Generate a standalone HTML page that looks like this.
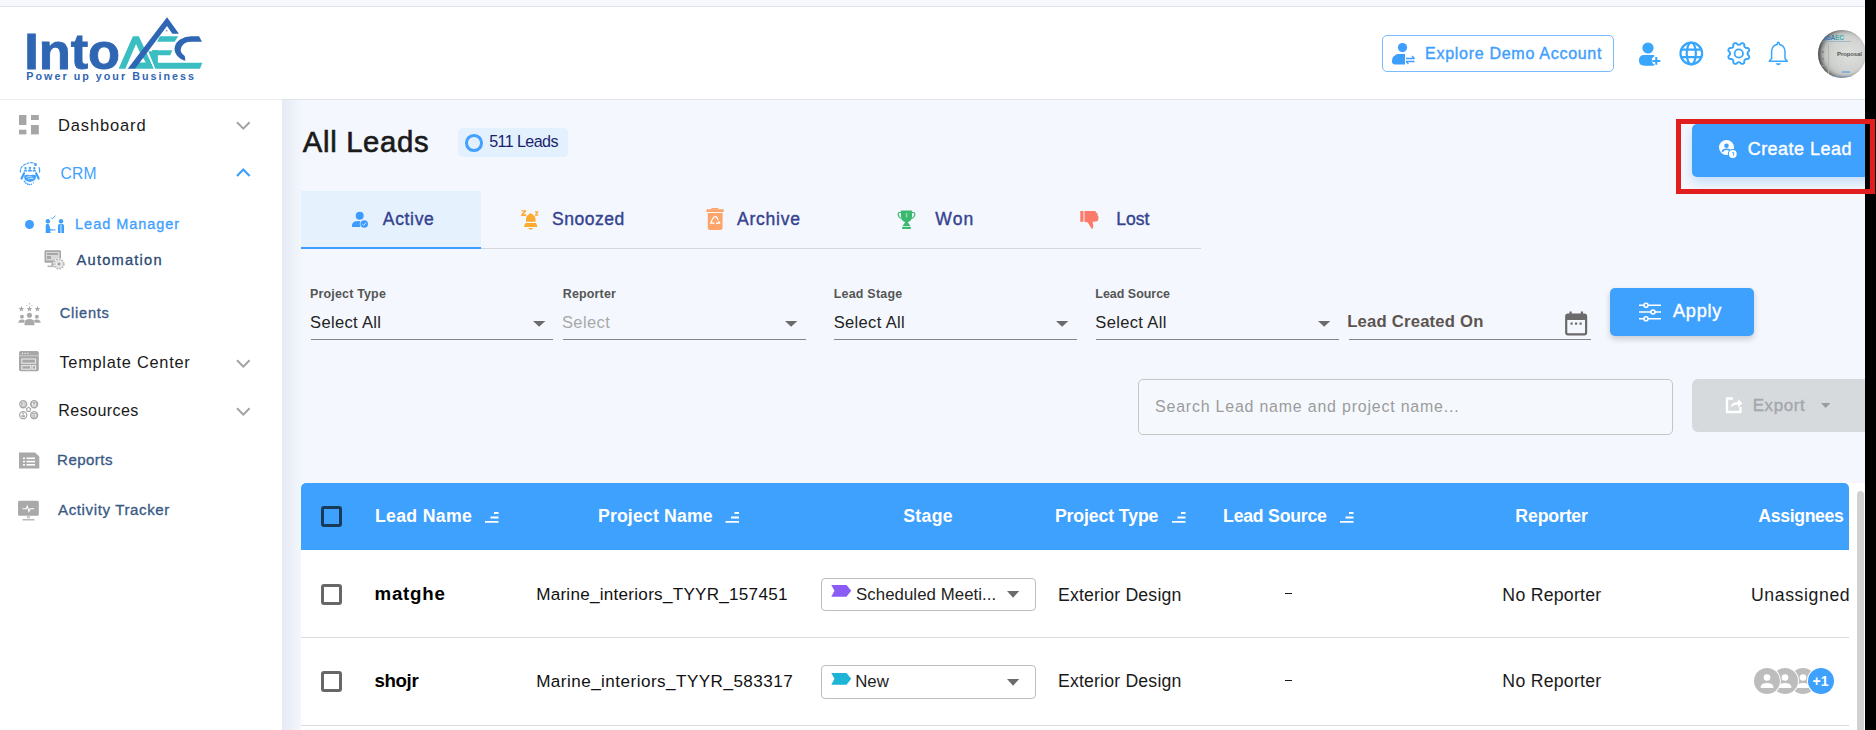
<!DOCTYPE html>
<html><head><meta charset="utf-8">
<style>
html,body{margin:0;padding:0;width:1876px;height:730px;overflow:hidden;background:#fff;}
body{position:relative;font-family:"Liberation Sans",sans-serif;}
.a{position:absolute;}
.tx{position:absolute;font-family:"Liberation Sans",sans-serif;line-height:1;white-space:nowrap;}
svg{position:absolute;overflow:visible;}
.chev{position:absolute;}
</style></head><body>
<!-- top strip -->
<div class="a" style="left:0;top:0;width:1876px;height:6px;background:#f7f8fd"></div>
<div class="a" style="left:0;top:6px;width:1876px;height:1px;background:#e1e3eb"></div>
<!-- header bottom border -->
<div class="a" style="left:0;top:99px;width:282px;height:1px;background:#efefef"></div>
<!-- main bg -->
<div class="a" style="left:282px;top:99px;width:1583px;height:631px;background:#f4f7fd"></div>
<div class="a" style="left:282px;top:99px;width:1583px;height:1px;background:#dfe4ea"></div>
<div class="a" style="left:282px;top:100px;width:20px;height:630px;background:linear-gradient(to right,#e5eaf4,#f4f7fd)"></div>

<!-- LOGO -->
<svg style="left:20px;top:10px" width="190" height="80" viewBox="0 0 1734 730">
  <text x="38" y="535" font-family="Liberation Sans" font-weight="700" font-size="450" fill="#2f66b3" stroke="#2f66b3" stroke-width="8" textLength="875" lengthAdjust="spacingAndGlyphs">Into</text>
  <g transform="translate(867,36.5) scale(0.7249)">
    <polygon points="45,690 225,280 300,280 490,690" fill="#3bbec1"/>
    <polygon points="130,690 265,378 340,545 300,610 250,690" fill="#fff"/>
    <polygon points="300,612 388,612 345,540" fill="#fff"/>
    <polygon points="565,280 795,280 752,350 530,350" fill="#3bbec1"/>
    <polygon points="470,455 722,455 695,518 466,518 " fill="#3bbec1"/>
    <polygon points="418,470 482,470 540,615 1100,615 1070,690 505,690" fill="#3bbec1"/>
    <polygon points="466,455 540,455 540,640 490,640" fill="#3bbec1"/>
    <line x1="405" y1="470" x2="500" y2="695" stroke="#fff" stroke-width="14"/>
    <polygon points="160,690 655,40 805,248 722,248 655,150 252,690" fill="#2f66b3"/>
    <rect x="640" y="200" width="20" height="20" fill="#7a9fd0"/>
    <path d="M1095,348 L1058,280 L960,280 A210,160 0 0 0 887,590 L878,528 A130,100 0 0 1 960,350 Z" fill="#2f66b3"/>
  </g>
  <text x="58" y="640" font-family="Liberation Sans" font-weight="700" font-size="98" fill="#2f66b3" textLength="1530" lengthAdjust="spacing">Power up your Business</text>
</svg>

<!-- Explore demo button -->
<div class="a" style="left:1382px;top:35px;width:230px;height:35px;border:1px solid #78bcff;border-radius:5px;background:#fff"></div>
<svg style="left:1392px;top:43px" width="24" height="22" viewBox="0 0 24 22">
  <circle cx="10.5" cy="4.6" r="4.6" fill="#3d9efe"/>
  <path d="M3,12.5 Q3.5,11 6,11 L13,11 L13,21.5 L3,21.5 Q0,21.5 0,18.5 Q0,13.5 3,12.5 Z" fill="#3d9efe"/>
  <path d="M14,15.5 L22.5,15.5 M20,13 L22.5,15.5 M14,18.5 L22.5,18.5 M16.5,21 L14,18.5" stroke="#3d9efe" stroke-width="1.3" fill="none"/>
</svg>

<!-- header icons -->
<svg style="left:1639px;top:42px" width="22" height="24" viewBox="0 0 22 24">
  <circle cx="9" cy="6" r="5.6" fill="#38a6fc"/>
  <path d="M5,13 L14,13 Q15.5,13 15.8,14.2 Q12.8,15 12.8,18.5 Q12.8,21.5 15.8,22.8 Q15.5,23.7 14,23.7 L5.5,23.7 Q0,23.7 0,18.5 Q0,13 5,13 Z" fill="#38a6fc"/>
  <path d="M17.3,15 L17.3,22.8 M13.3,19 L21.4,19" stroke="#38a6fc" stroke-width="2.1"/>
</svg>
<svg style="left:1679px;top:41px" width="25" height="25" viewBox="0 0 25 25">
  <circle cx="12.3" cy="12.5" r="10.8" stroke="#38a6fc" stroke-width="2.2" fill="none"/>
  <ellipse cx="12.3" cy="12.5" rx="4.6" ry="10.8" stroke="#38a6fc" stroke-width="2.2" fill="none"/>
  <path d="M2.5,8.7 L22.1,8.7 M2.5,16.2 L22.1,16.2" stroke="#38a6fc" stroke-width="2.2"/>
</svg>
<svg style="left:1726px;top:41px" width="26" height="26" viewBox="0 0 26 26">
  <path d="M21.50,12.50 L21.53,12.84 L21.62,13.19 L21.77,13.56 L21.99,13.96 L22.51,14.43 L23.00,14.95 L23.17,15.42 L23.22,15.89 L23.18,16.33 L23.06,16.75 L22.85,17.13 L22.56,17.47 L22.20,17.76 L21.75,17.98 L21.03,18.00 L20.33,17.97 L19.89,18.09 L19.52,18.24 L19.21,18.43 L18.95,18.65 L18.73,18.91 L18.54,19.22 L18.39,19.59 L18.27,20.03 L18.30,20.73 L18.28,21.45 L18.06,21.90 L17.77,22.26 L17.43,22.55 L17.05,22.76 L16.63,22.88 L16.19,22.92 L15.72,22.87 L15.25,22.70 L14.73,22.21 L14.26,21.69 L13.86,21.47 L13.49,21.32 L13.14,21.23 L12.80,21.20 L12.46,21.23 L12.11,21.32 L11.74,21.47 L11.34,21.69 L10.87,22.21 L10.35,22.70 L9.88,22.87 L9.41,22.92 L8.97,22.88 L8.55,22.76 L8.17,22.55 L7.83,22.26 L7.54,21.90 L7.32,21.45 L7.30,20.73 L7.33,20.03 L7.21,19.59 L7.06,19.22 L6.87,18.91 L6.65,18.65 L6.39,18.43 L6.08,18.24 L5.71,18.09 L5.27,17.97 L4.57,18.00 L3.85,17.98 L3.40,17.76 L3.04,17.47 L2.75,17.13 L2.54,16.75 L2.42,16.33 L2.38,15.89 L2.43,15.42 L2.60,14.95 L3.09,14.43 L3.61,13.96 L3.83,13.56 L3.98,13.19 L4.07,12.84 L4.10,12.50 L4.07,12.16 L3.98,11.81 L3.83,11.44 L3.61,11.04 L3.09,10.57 L2.60,10.05 L2.43,9.58 L2.38,9.11 L2.42,8.67 L2.54,8.25 L2.75,7.87 L3.04,7.53 L3.40,7.24 L3.85,7.02 L4.57,7.00 L5.27,7.03 L5.71,6.91 L6.08,6.76 L6.39,6.57 L6.65,6.35 L6.87,6.09 L7.06,5.78 L7.21,5.41 L7.33,4.97 L7.30,4.27 L7.32,3.55 L7.54,3.10 L7.83,2.74 L8.17,2.45 L8.55,2.24 L8.97,2.12 L9.41,2.08 L9.88,2.13 L10.35,2.30 L10.87,2.79 L11.34,3.31 L11.74,3.53 L12.11,3.68 L12.46,3.77 L12.80,3.80 L13.14,3.77 L13.49,3.68 L13.86,3.53 L14.26,3.31 L14.73,2.79 L15.25,2.30 L15.72,2.13 L16.19,2.08 L16.63,2.12 L17.05,2.24 L17.43,2.45 L17.77,2.74 L18.06,3.10 L18.28,3.55 L18.30,4.27 L18.27,4.97 L18.39,5.41 L18.54,5.78 L18.73,6.09 L18.95,6.35 L19.21,6.57 L19.52,6.76 L19.89,6.91 L20.33,7.03 L21.03,7.00 L21.75,7.02 L22.20,7.24 L22.56,7.53 L22.85,7.87 L23.06,8.25 L23.18,8.67 L23.22,9.11 L23.17,9.58 L23.00,10.05 L22.51,10.57 L21.99,11.04 L21.77,11.44 L21.62,11.81 L21.53,12.16 L21.50,12.50 Z" stroke="#38a6fc" stroke-width="1.9" fill="none"/>
  <circle cx="12.8" cy="12.5" r="4.2" stroke="#38a6fc" stroke-width="1.8" fill="none"/>
</svg>
<svg style="left:1768px;top:41px" width="22" height="26" viewBox="0 0 22 26">
  <path d="M10.3,1.3 Q9.2,1.3 9.2,3.6 Q4,4.5 3.6,10.5 L3.6,17.5 L1.3,20.3 L19.3,20.3 L17,17.5 L17,10.5 Q16.6,4.5 11.4,3.6 Q11.4,1.3 10.3,1.3 Z" stroke="#3aa6fc" stroke-width="1.5" fill="none" stroke-linejoin="round"/>
  <path d="M7.6,22.3 L13,22.3 Q11.8,24.3 10.3,24.3 Q8.8,24.3 7.6,22.3 Z" fill="#3aa6fc"/>
</svg>
<!-- avatar -->
<div class="a" style="left:1818px;top:30px;width:48px;height:48px;border-radius:50%;background:radial-gradient(ellipse 75% 70% at 66% 50%,#dde0dc 0%,#d0d3cf 50%,#bcbfbb 80%,#7d807c 94%,#333 100%);box-shadow:inset 3px 0 4px rgba(0,0,0,.55);overflow:hidden">
  <div class="a" style="left:3px;top:4px;font:700 6.5px/7px 'Liberation Sans';color:#3e78b5;letter-spacing:-0.2px">ntoA<span style="color:#3aa9a9">EC</span></div>
  <div class="a" style="left:1px;top:11px;width:32px;height:1px;background:#7fa8c8;opacity:.6"></div>
  <div class="a" style="left:10px;top:14px;width:1px;height:34px;background:#b0b3af"></div>
  <div class="a" style="left:19px;top:21px;font:700 6px/7px 'Liberation Sans';color:#555;letter-spacing:-0.1px">Proposal</div>
  <div class="a" style="left:3px;top:21px;width:3px;height:2px;background:#8a8a8a"></div>
  <div class="a" style="left:3px;top:28px;width:3px;height:2px;background:#8a8a8a"></div>
  <div class="a" style="left:3px;top:35px;width:3px;height:2px;background:#8a8a8a"></div>
  <div class="a" style="left:24px;top:41px;width:8px;height:2px;background:#7aa8d8;opacity:.8"></div>
  <div class="a" style="left:10px;top:46px;width:26px;height:1px;background:#6d9bd0;opacity:.6"></div>
</div>

<!-- SIDEBAR ICONS -->
<svg style="left:19px;top:115px" width="20" height="20" viewBox="0 0 20 20">
  <rect x="0" y="0" width="7.4" height="10" fill="#a6a6a6"/>
  <rect x="12" y="0" width="7.8" height="5" fill="#a6a6a6"/>
  <rect x="0" y="14.7" width="7.4" height="4.7" fill="#a6a6a6"/>
  <rect x="12" y="10" width="7.8" height="9.4" fill="#a6a6a6"/>
</svg>
<svg class="chev" style="left:236px;top:121px" width="15" height="10" viewBox="0 0 15 10"><path d="M1,1.2 L7.3,7.6 L13.6,1.2" stroke="#a3a3a3" stroke-width="2" fill="none"/></svg>

<svg style="left:15px;top:158px" width="30" height="32" viewBox="0 0 684 730">
  <g fill="#3f9ffd" stroke="none">
  <path d="M120,330 Q110,160 345,105 Q420,100 470,140" stroke="#3f9ffd" stroke-width="26" fill="none" stroke-dasharray="70,18"/>
  <circle cx="468" cy="152" r="32"/>
  <path d="M545,205 Q570,260 558,335" stroke="#3f9ffd" stroke-width="26" fill="none"/>
  <circle cx="240" cy="230" r="27"/><circle cx="340" cy="225" r="27"/><circle cx="440" cy="230" r="27"/>
  <path d="M198,310 Q205,265 240,265 Q275,265 282,310 Z"/>
  <path d="M292,310 Q298,258 340,258 Q382,258 388,310 Z"/>
  <path d="M398,310 Q405,265 440,265 Q475,265 482,310 Z"/>
  <path d="M150,468 L205,350" stroke="#3f9ffd" stroke-width="50" stroke-linecap="round" fill="none"/>
  <path d="M538,468 L483,350" stroke="#3f9ffd" stroke-width="50" stroke-linecap="round" fill="none"/>
  <path d="M210,400 Q280,370 345,395 Q410,370 480,400 L470,480 Q420,545 340,548 Q260,545 215,480 Z"/>
  <circle cx="218" cy="535" r="20"/><circle cx="250" cy="572" r="20"/><circle cx="292" cy="598" r="20"/><circle cx="333" cy="607" r="18"/><circle cx="375" cy="598" r="16"/><circle cx="420" cy="565" r="14"/>
  </g>
  <path d="M255,440 Q320,405 400,440 M290,480 Q340,460 420,470" stroke="#fff" stroke-width="16" fill="none"/>
</svg>
<svg class="chev" style="left:236px;top:168px" width="15" height="10" viewBox="0 0 15 10"><path d="M1,8 L7.3,1.6 L13.6,8" stroke="#3f9ffd" stroke-width="2.2" fill="none"/></svg>

<div class="a" style="left:25px;top:220.3px;width:9px;height:9px;border-radius:50%;background:#3f9ffd"></div>
<svg style="left:45px;top:215px" width="20" height="19" viewBox="0 0 20 19">
  <circle cx="2.9" cy="6.2" r="2.2" fill="#3f9ffd"/>
  <circle cx="16" cy="6.2" r="2.2" fill="#3f9ffd"/>
  <path d="M6,2.4 L7.4,3.8 L10.5,0.6" stroke="#3f9ffd" stroke-width="0.9" fill="none"/>
  <path d="M0.7,18 L0.7,10.5 Q0.7,8.8 2.6,8.8 Q4,8.8 4.4,10.5 L5.5,14.2 L10.5,14.6 L10.5,15.5 L5,15.5 L5.8,18 Z" fill="#3f9ffd"/>
  <path d="M13,18 L13,11 Q13,8.8 16,8.8 Q19,8.8 19,11 L19,18 Z" fill="#3f9ffd"/>
  <path d="M15.9,9.5 L15.9,18" stroke="#fff" stroke-width="0.8"/>
</svg>
<svg style="left:44px;top:250px" width="22" height="21" viewBox="0 0 22 21">
  <rect x="0.5" y="0.3" width="16.5" height="12.5" rx="1.2" fill="#a7a7a7"/>
  <rect x="2" y="2" width="13.5" height="8.5" fill="#d8d8d8"/>
  <rect x="3" y="3" width="11" height="2" fill="#a7a7a7"/>
  <rect x="3" y="6" width="4" height="3" fill="#a7a7a7"/>
  <rect x="7.5" y="13" width="2.5" height="3" fill="#a7a7a7"/>
  <rect x="3.5" y="15.5" width="10" height="1.6" fill="#b8b8b8"/>
  <circle cx="15" cy="14" r="5.8" fill="#fff"/>
  <circle cx="15" cy="14" r="4.9" fill="#efefef" stroke="#b5b5b5" stroke-width="1.5" stroke-dasharray="1.7,1.1"/>
  <circle cx="15" cy="14" r="3.6" fill="#f2f2f2" stroke="#c4c4c4" stroke-width="0.6"/>
  <circle cx="15" cy="14" r="1.7" fill="#a7a7a7"/>
</svg>
<svg style="left:14px;top:298px" width="30" height="32" viewBox="0 0 684 730">
  <g fill="#a9a9a9">
  <polygon points="168.0,178.0 185.6,225.7 236.5,227.8 196.5,259.3 210.3,308.2 168.0,280.0 125.7,308.2 139.5,259.3 99.5,227.8 150.4,225.7"/><polygon points="352.0,178.0 369.6,225.7 420.5,227.8 380.5,259.3 394.3,308.2 352.0,280.0 309.7,308.2 323.5,259.3 283.5,227.8 334.4,225.7"/><polygon points="535.0,178.0 552.6,225.7 603.5,227.8 563.5,259.3 577.3,308.2 535.0,280.0 492.7,308.2 506.5,259.3 466.5,227.8 517.4,225.7"/>
  <path d="M352,112 L352,150 M285,160 L305,185 M420,160 L400,185" stroke="#a9a9a9" stroke-width="18"/>
  <circle cx="352" cy="395" r="58"/>
  <circle cx="180" cy="425" r="45"/>
  <circle cx="522" cy="425" r="45"/>
  <path d="M240,620 L240,560 Q245,480 352,478 Q460,480 465,560 L465,620 Z"/>
  <path d="M95,565 Q100,490 180,488 Q230,488 250,510 Q228,530 225,565 Z"/>
  <path d="M610,565 Q605,490 522,488 Q472,488 452,510 Q474,530 477,565 Z"/>
  </g>
</svg>
<svg style="left:19px;top:351px" width="20" height="21" viewBox="0 0 20 21">
  <rect x="0" y="0" width="19.8" height="20.2" rx="1.8" fill="#a7a7a7"/>
  <rect x="0" y="4.4" width="19.8" height="0.8" fill="#d5d5d5"/>
  <circle cx="3.5" cy="2.4" r="0.55" fill="#fff"/><circle cx="6.2" cy="2.4" r="0.55" fill="#fff"/><circle cx="9" cy="2.4" r="0.55" fill="#fff"/>
  <rect x="2.8" y="8" width="13.8" height="4.2" fill="none" stroke="#f0f0f0" stroke-width="1"/>
  <rect x="2.8" y="14.7" width="9" height="3.5" fill="none" stroke="#f0f0f0" stroke-width="1"/>
  <rect x="13.2" y="14.7" width="3.4" height="3.5" fill="none" stroke="#f0f0f0" stroke-width="1"/>
</svg>
<svg class="chev" style="left:236px;top:359px" width="15" height="10" viewBox="0 0 15 10"><path d="M1,1.2 L7.3,7.6 L13.6,1.2" stroke="#a3a3a3" stroke-width="2" fill="none"/></svg>
<svg style="left:14px;top:396px" width="30" height="28" viewBox="0 0 782 730">
  <g fill="none" stroke="#a9a9a9" stroke-width="34">
  <circle cx="240" cy="215" r="92"/><circle cx="525" cy="215" r="92"/><circle cx="240" cy="500" r="92"/><circle cx="525" cy="500" r="92"/>
  <path d="M380,295 L435,335 L415,400 L345,400 L325,335 Z" stroke-width="30"/>
  </g>
  <g fill="#a9a9a9">
  <rect x="190" y="160" width="100" height="110" fill="none" stroke="#a9a9a9" stroke-width="22"/>
  <rect x="210" y="185" width="20" height="60"/><rect x="250" y="185" width="20" height="60"/>
  <rect x="460" y="160" width="130" height="100" fill="none" stroke="#a9a9a9" stroke-width="24"/>
  <rect x="495" y="170" width="60" height="50"/>
  <circle cx="240" cy="455" r="25"/><rect x="195" y="500" width="90" height="55"/>
  <rect x="470" y="455" width="110" height="100" fill="none" stroke="#a9a9a9" stroke-width="24"/>
  <rect x="505" y="480" width="40" height="60"/>
  </g>
</svg>
<svg class="chev" style="left:236px;top:407px" width="15" height="10" viewBox="0 0 15 10"><path d="M1,1.2 L7.3,7.6 L13.6,1.2" stroke="#a3a3a3" stroke-width="2" fill="none"/></svg>
<svg style="left:19px;top:452px" width="21" height="17" viewBox="0 0 21 17">
  <path d="M0,0.5 L16,0.5 L20.3,4.5 L20.3,16.5 L0,16.5 Z" fill="#a9a9a9"/>
  <g fill="#fff"><rect x="4" y="5.5" width="2" height="1.6"/><rect x="7.5" y="5.5" width="8.5" height="1.6"/><rect x="4" y="8.8" width="2" height="1.6"/><rect x="7.5" y="8.8" width="8.5" height="1.6"/><rect x="4" y="12" width="2" height="1.6"/><rect x="7.5" y="12" width="8.5" height="1.6"/></g>
</svg>
<svg style="left:18px;top:500px" width="22" height="22" viewBox="0 0 22 22">
  <rect x="0" y="0.8" width="20.8" height="15" rx="1.5" fill="#a9a9a9"/>
  <path d="M4.5,8.8 L8.2,8.8 L9.3,6.3 L11,11.5 L12.2,8.8 L16.2,8.8" stroke="#fff" stroke-width="1.1" fill="none"/>
  <rect x="8.8" y="15.8" width="3.2" height="2.5" fill="#c9c9c9"/>
  <rect x="4.5" y="19.2" width="12" height="1.2" fill="#a9a9a9"/>
</svg>

<!-- 511 badge -->
<div class="a" style="left:458px;top:128px;width:110px;height:29px;border-radius:5px;background:#e3f0fd"></div>
<div class="a" style="left:465px;top:134px;width:11.6px;height:11.6px;border:3px solid #43a1ff;border-radius:50%"></div>

<!-- Create lead -->
<div class="a" style="left:1692px;top:124px;width:190px;height:53px;border-radius:5px;background:#3fa1fe;box-shadow:0 5px 12px rgba(60,150,240,.28)"></div>
<svg style="left:1719px;top:140px" width="20" height="20" viewBox="0 0 20 20">
  <circle cx="7.5" cy="7.5" r="7.5" fill="#fff"/>
  <circle cx="7.5" cy="5.8" r="2.3" fill="#3fa1fe"/>
  <path d="M3.3,12 Q4,9.3 7.5,9.3 Q11,9.3 11.7,12" stroke="#3fa1fe" stroke-width="1.6" fill="none"/>
  <circle cx="13.8" cy="14" r="5" fill="#3fa1fe"/>
  <circle cx="13.8" cy="14" r="3.9" fill="#fff"/>
  <path d="M13.3,12.5 L14.6,12.5 L14.6,15.5" stroke="#3fa1fe" stroke-width="0.9" fill="none"/>
</svg>

<!-- tabs -->
<div class="a" style="left:301px;top:191px;width:180px;height:56px;background:#e5f2fe"></div>
<div class="a" style="left:301px;top:247px;width:180px;height:2px;background:#3d9efe"></div>
<div class="a" style="left:481px;top:247.5px;width:720px;height:1px;background:#d3d8df"></div>
<svg style="left:351px;top:211px" width="19" height="18" viewBox="0 0 19 18">
  <circle cx="8.7" cy="4.8" r="4" fill="#3d9bfd"/>
  <path d="M1,15.8 Q0.5,11 5,10.3 L9.3,10 L9.3,16 L2,16 Q1,16 1,15.8 Z" fill="#3d9bfd"/>
  <circle cx="13.2" cy="13" r="4.5" fill="#e5f2fe"/>
  <circle cx="13.2" cy="13" r="3.8" fill="#3d9bfd"/>
  <path d="M11.3,13.2 L12.6,14.4 L15.1,11.7" stroke="#e5f2fe" stroke-width="0.9" fill="none"/>
</svg>
<svg style="left:515px;top:205px" width="30" height="30" viewBox="0 0 730 730">
  <g fill="#fdab2f">
  <path d="M160,125 L272,125 L272,160 L205,228 L272,228 L272,265 L150,265 L150,232 L218,160 L160,160 Z"/>
  <path d="M490,155 L568,155 L568,182 L525,232 L568,232 L568,262 L485,262 L485,236 L528,186 L490,186 Z"/>
  <path d="M268,410 L268,330 Q270,265 330,230 L380,195 L430,230 Q495,270 500,330 L500,410 Z"/>
  <path d="M258,440 L510,440 L540,505 L540,535 L222,535 L222,505 Z"/>
  <path d="M318,560 L442,560 Q410,602 380,602 Q350,602 318,560 Z"/>
  </g>
</svg>
<svg style="left:706px;top:208px" width="18" height="22" viewBox="0 0 18 22">
  <rect x="0.4" y="1.2" width="17.4" height="2.7" rx="0.6" fill="#fda46a"/>
  <path d="M4.8,1.3 L5.8,0 L12,0 L13,1.3 Z" fill="#fda46a"/>
  <path d="M1.8,4.9 L16.6,4.9 L16.6,19.4 Q16.6,21.9 14.1,21.9 L4.3,21.9 Q1.8,21.9 1.8,19.4 Z" fill="#fda46a"/>
  <g stroke="#fff" stroke-width="1.2" fill="none" stroke-linecap="round">
  <path d="M8.2,8.6 L6.2,11.8"/><path d="M10.2,8.6 L12,11.6"/><path d="M5.6,13.6 L4.8,15.2 L8,15.2"/><path d="M10.6,15.2 L13.6,15.2 L12.8,13.6"/>
  </g>
  <path d="M9.2,7.8 L10.6,9 L8.4,9.4 Z M6.5,12.6 L5,14 L4.8,12 Z M11.2,16.5 L9.8,15.2 L11.2,14 Z" fill="#fff"/>
</svg>
<svg style="left:897px;top:210px" width="19" height="20" viewBox="0 0 19 20">
  <path d="M4,0.5 L15,0.5 L15,6.5 Q15,11.5 9.5,12.3 Q4,11.5 4,6.5 Z" fill="#3bb86f"/>
  <path d="M4,2.5 Q1,2.2 1.2,4.5 Q1.5,7.5 4.5,8.5 M15,2.5 Q18,2.2 17.8,4.5 Q17.5,7.5 14.5,8.5" stroke="#3bb86f" stroke-width="1.2" fill="none"/>
  <path d="M8.3,12 L10.7,12 L13.4,16 L5.6,16 Z" fill="#3bb86f"/>
  <rect x="5.2" y="16.8" width="8.6" height="2.3" rx="0.5" fill="#3bb86f"/>
  <rect x="8.8" y="3" width="1.5" height="4.5" fill="#8fd8ac"/>
</svg>
<svg style="left:1080px;top:210px" width="20" height="20" viewBox="0 0 20 20">
  <rect x="0.3" y="1" width="3.2" height="10.8" fill="#fb7a6a"/>
  <path d="M4.5,1 L14.5,1 Q16.3,1 16.3,2.8 Q18.3,3.3 17.6,5.5 Q19.3,6.3 18.3,8.5 Q19,10.5 16.5,11.5 L12.5,11.8 L13.3,15.5 Q13.6,18.5 11.8,19 L7.8,12.5 L4.5,11.8 Z" fill="#fb7a6a"/>
</svg>

<!-- filters -->
<div class="a" style="left:311px;top:339.2px;width:242px;height:1.2px;background:#858585"></div>
<div class="a" style="left:563px;top:339.2px;width:243px;height:1.2px;background:#858585"></div>
<div class="a" style="left:834.4px;top:339.2px;width:242.4px;height:1.2px;background:#858585"></div>
<div class="a" style="left:1096.3px;top:339.2px;width:242.4px;height:1.2px;background:#858585"></div>
<div class="a" style="left:1348.5px;top:339.2px;width:242.5px;height:1.2px;background:#858585"></div>
<svg style="left:533px;top:321px" width="13" height="6" viewBox="0 0 13 6"><path d="M0,0 L12.3,0 L6.15,5.8 Z" fill="#6b6b6b"/></svg>
<svg style="left:785px;top:321px" width="13" height="6" viewBox="0 0 13 6"><path d="M0,0 L12.3,0 L6.15,5.8 Z" fill="#6b6b6b"/></svg>
<svg style="left:1056.3px;top:321px" width="13" height="6" viewBox="0 0 13 6"><path d="M0,0 L12.3,0 L6.15,5.8 Z" fill="#6b6b6b"/></svg>
<svg style="left:1318.3px;top:321px" width="13" height="6" viewBox="0 0 13 6"><path d="M0,0 L12.3,0 L6.15,5.8 Z" fill="#6b6b6b"/></svg>
<svg style="left:1565px;top:311px" width="23" height="25" viewBox="0 0 23 25">
  <rect x="1.2" y="3.5" width="19.9" height="19.8" rx="1.8" stroke="#6b6b6b" stroke-width="2.2" fill="none"/>
  <rect x="1.2" y="3.5" width="19.9" height="5.5" fill="#6b6b6b"/>
  <rect x="4.5" y="0.5" width="2.2" height="4" fill="#6b6b6b"/><rect x="15.8" y="0.5" width="2.2" height="4" fill="#6b6b6b"/>
  <rect x="5.5" y="11.5" width="2.2" height="2.2" fill="#6b6b6b"/><rect x="10" y="11.5" width="2.2" height="2.2" fill="#6b6b6b"/><rect x="14.5" y="11.5" width="2.2" height="2.2" fill="#6b6b6b"/>
</svg>
<!-- apply -->
<div class="a" style="left:1610px;top:288px;width:144px;height:48px;border-radius:5px;background:#3fa1fe;box-shadow:0 3px 6px rgba(0,0,0,.18)"></div>
<svg style="left:1638px;top:302px" width="24" height="20" viewBox="0 0 24 20">
  <g stroke="#fff" stroke-width="1.6" fill="none">
  <path d="M1,3.3 L6,3.3 M10,3.3 L23,3.3 M1,10 L13,10 M17,10 L23,10 M1,16.7 L6,16.7 M10,16.7 L23,16.7"/>
  <circle cx="8" cy="3.3" r="2"/><circle cx="15" cy="10" r="2"/><circle cx="8" cy="16.7" r="2"/>
  </g>
</svg>

<!-- search -->
<div class="a" style="left:1138px;top:379px;width:533px;height:54px;border:1px solid #c6c6c6;border-radius:5px;background:#f5f8fd"></div>
<!-- export -->
<div class="a" style="left:1692px;top:379px;width:190px;height:53px;border-radius:6px;background:#d6dadd"></div>
<svg style="left:1725px;top:396px" width="18" height="18" viewBox="0 0 18 18">
  <path d="M8,2.5 L2,2.5 L2,16 L15.5,16 L15.5,11" stroke="#fff" stroke-width="2.4" fill="none" stroke-linejoin="round"/>
  <path d="M5.5,12 Q6,6 13,6 L13,3 L17.3,7.3 L13,11.5 L13,8.5 Q8,8.3 5.5,12 Z" fill="#fff"/>
</svg>
<svg style="left:1821px;top:402.8px" width="10" height="6" viewBox="0 0 10 6"><path d="M0,0 L9.4,0 L4.7,5 Z" fill="#9a9a9a"/></svg>

<!-- table -->
<div class="a" style="left:301px;top:483px;width:1564px;height:247px;background:#fff"></div>
<div class="a" style="left:301px;top:483px;width:1548px;height:67px;background:#3fa1fe;border-radius:5px 5px 0 0"></div>
<div class="a" style="left:1857px;top:491px;width:7px;height:250px;border-radius:3.5px;background:#d1d1d1"></div>
<div class="a" style="left:321px;top:505.6px;width:15px;height:15px;border:3px solid #173a5b;border-radius:3px"></div>
<svg style="left:484.5px;top:512px" width="14" height="11" viewBox="0 0 14 11"><path d="M9,1 L13.5,1 M5.5,5.5 L13.5,5.5 M0,9.8 L13.5,9.8" stroke="#fff" stroke-width="1.8"/></svg>
<svg style="left:725px;top:512px" width="15" height="11" viewBox="0 0 14 11"><path d="M9,1 L13.5,1 M5.5,5.5 L13.5,5.5 M0,9.8 L13.5,9.8" stroke="#fff" stroke-width="1.8"/></svg>
<svg style="left:1171.5px;top:512px" width="14" height="11" viewBox="0 0 14 11"><path d="M9,1 L13.5,1 M5.5,5.5 L13.5,5.5 M0,9.8 L13.5,9.8" stroke="#fff" stroke-width="1.8"/></svg>
<svg style="left:1339.5px;top:512px" width="14" height="11" viewBox="0 0 14 11"><path d="M9,1 L13.5,1 M5.5,5.5 L13.5,5.5 M0,9.8 L13.5,9.8" stroke="#fff" stroke-width="1.8"/></svg>
<div class="a" style="left:301px;top:637px;width:1548px;height:1px;background:#dcdcdc"></div>
<div class="a" style="left:301px;top:725px;width:1548px;height:1px;background:#dcdcdc"></div>
<div class="a" style="left:321px;top:583.5px;width:15px;height:15px;border:3px solid #676767;border-radius:3px"></div>
<div class="a" style="left:321px;top:670.8px;width:15px;height:15px;border:3px solid #676767;border-radius:3px"></div>
<!-- stage boxes -->
<div class="a" style="left:820.5px;top:577.6px;width:213px;height:31px;border:1px solid #bdbdbd;border-radius:4px;background:#fff"></div>
<div class="a" style="left:820.5px;top:665px;width:213px;height:32px;border:1px solid #bdbdbd;border-radius:4px;background:#fff"></div>
<svg style="left:830.5px;top:585.3px" width="21" height="12" viewBox="0 0 21 12"><path d="M0.3,0 L15.5,0 L20.2,5.8 L15.5,11.7 L0.3,11.7 L3.5,5.8 Z" fill="#8a5cf5"/></svg>
<svg style="left:830.5px;top:672.5px" width="21" height="12" viewBox="0 0 21 12"><path d="M0.3,0 L15.5,0 L20.2,5.8 L15.5,11.7 L0.3,11.7 L3.5,5.8 Z" fill="#1eb4d6"/></svg>
<svg style="left:1007px;top:591.3px" width="13" height="7" viewBox="0 0 13 7"><path d="M0,0 L12.2,0 L6.1,6.8 Z" fill="#6b6b6b"/></svg>
<svg style="left:1007px;top:678.5px" width="13" height="7" viewBox="0 0 13 7"><path d="M0,0 L12.2,0 L6.1,6.8 Z" fill="#6b6b6b"/></svg>
<div class="a" style="left:1285px;top:593px;width:7px;height:1.4px;background:#1a1a1a"></div>
<div class="a" style="left:1285px;top:680px;width:7px;height:1.4px;background:#1a1a1a"></div>
<!-- avatars -->
<svg style="left:1752px;top:666px" width="86" height="30" viewBox="0 0 86 30">
  <defs><g id="av"><circle r="14" fill="#fff"/><circle r="13" fill="#bdbdbd"/><circle cy="-3.5" r="3.3" fill="#fff"/><path d="M-6.5,7 Q-6.5,2 0,2 Q6.5,2 6.5,7 Z" fill="#fff"/></g></defs>
  <use href="#av" x="51" y="15"/>
  <use href="#av" x="33" y="15"/>
  <use href="#av" x="15" y="15"/>
  <circle cx="69" cy="15" r="14" fill="#fff"/><circle cx="69" cy="15" r="13" fill="#3fa1fe"/>
  <text x="68.5" y="20" text-anchor="middle" font-family="Liberation Sans" font-weight="700" font-size="14" fill="#fff">+1</text>
</svg>

<div class="tx" style="left:1425.10px;top:45.38px;font-size:16.09px;font-weight:400;color:#3d9efe;letter-spacing:0.674px;-webkit-text-stroke:0.35px #3d9efe;">Explore Demo Account</div>
<div class="tx" style="left:57.94px;top:117.91px;font-size:16.52px;font-weight:400;color:#1a1a1a;letter-spacing:0.863px;">Dashboard</div>
<div class="tx" style="left:60.52px;top:165.54px;font-size:15.65px;font-weight:400;color:#3f9ffd;letter-spacing:0.150px;">CRM</div>
<div class="tx" style="left:75.10px;top:216.89px;font-size:14.49px;font-weight:400;color:#3f9ffd;letter-spacing:0.964px;-webkit-text-stroke:0.32px #3f9ffd;">Lead Manager</div>
<div class="tx" style="left:76.58px;top:252.61px;font-size:14.64px;font-weight:400;color:#2d4a73;letter-spacing:1.222px;-webkit-text-stroke:0.32px #2d4a73;">Automation</div>
<div class="tx" style="left:59.84px;top:306.14px;font-size:14.64px;font-weight:400;color:#3a5a85;letter-spacing:0.717px;-webkit-text-stroke:0.32px #3a5a85;">Clients</div>
<div class="tx" style="left:59.42px;top:354.14px;font-size:16.38px;font-weight:400;color:#1a1a1a;letter-spacing:0.736px;">Template Center</div>
<div class="tx" style="left:58.31px;top:401.85px;font-size:16.09px;font-weight:400;color:#1a1a1a;letter-spacing:0.400px;">Resources</div>
<div class="tx" style="left:57.10px;top:452.08px;font-size:15.07px;font-weight:400;color:#3a5a85;letter-spacing:0.433px;-webkit-text-stroke:0.33px #3a5a85;">Reports</div>
<div class="tx" style="left:58.00px;top:502.24px;font-size:15.07px;font-weight:400;color:#3a5a85;letter-spacing:0.613px;-webkit-text-stroke:0.33px #3a5a85;">Activity Tracker</div>
<div class="tx" style="left:302.74px;top:127.22px;font-size:29.28px;font-weight:400;color:#1a1a1a;letter-spacing:0.688px;-webkit-text-stroke:0.64px #1a1a1a;">All Leads</div>
<div class="tx" style="left:489.26px;top:133.27px;font-size:16.09px;font-weight:400;color:#1b1f6b;letter-spacing:-0.588px;">511 Leads</div>
<div class="tx" style="left:1747.68px;top:141.06px;font-size:17.97px;font-weight:400;color:#ffffff;letter-spacing:0.500px;-webkit-text-stroke:0.39px #ffffff;">Create Lead</div>
<div class="tx" style="left:382.79px;top:211.43px;font-size:17.54px;font-weight:400;color:#34428f;letter-spacing:0.660px;-webkit-text-stroke:0.38px #34428f;">Active</div>
<div class="tx" style="left:552.05px;top:211.43px;font-size:17.54px;font-weight:400;color:#34428f;letter-spacing:0.483px;-webkit-text-stroke:0.38px #34428f;">Snoozed</div>
<div class="tx" style="left:737.00px;top:211.43px;font-size:17.54px;font-weight:400;color:#34428f;letter-spacing:0.750px;-webkit-text-stroke:0.38px #34428f;">Archive</div>
<div class="tx" style="left:935.21px;top:211.43px;font-size:17.54px;font-weight:400;color:#34428f;letter-spacing:1.200px;-webkit-text-stroke:0.38px #34428f;">Won</div>
<div class="tx" style="left:1116.15px;top:211.43px;font-size:17.54px;font-weight:400;color:#34428f;letter-spacing:0.033px;-webkit-text-stroke:0.38px #34428f;">Lost</div>
<div class="tx" style="left:310.10px;top:287.56px;font-size:12.46px;font-weight:700;color:#555555;letter-spacing:0.173px;">Project Type</div>
<div class="tx" style="left:562.84px;top:287.56px;font-size:12.46px;font-weight:700;color:#555555;letter-spacing:0.157px;">Reporter</div>
<div class="tx" style="left:833.68px;top:287.56px;font-size:12.46px;font-weight:700;color:#555555;letter-spacing:0.233px;">Lead Stage</div>
<div class="tx" style="left:1095.31px;top:287.56px;font-size:12.46px;font-weight:700;color:#555555;letter-spacing:0.000px;">Lead Source</div>
<div class="tx" style="left:310.10px;top:315.49px;font-size:16.52px;font-weight:400;color:#222222;letter-spacing:0.333px;">Select All</div>
<div class="tx" style="left:561.94px;top:315.49px;font-size:16.52px;font-weight:400;color:#a8a8a8;letter-spacing:0.400px;">Select</div>
<div class="tx" style="left:833.68px;top:315.49px;font-size:16.52px;font-weight:400;color:#222222;letter-spacing:0.344px;">Select All</div>
<div class="tx" style="left:1095.31px;top:315.49px;font-size:16.52px;font-weight:400;color:#222222;letter-spacing:0.344px;">Select All</div>
<div class="tx" style="left:1347.15px;top:314.16px;font-size:16.67px;font-weight:700;color:#5d5450;letter-spacing:0.214px;">Lead Created On</div>
<div class="tx" style="left:1673.00px;top:301.87px;font-size:18.12px;font-weight:400;color:#ffffff;letter-spacing:0.750px;-webkit-text-stroke:0.40px #ffffff;">Apply</div>
<div class="tx" style="left:1155.05px;top:399.09px;font-size:15.94px;font-weight:400;color:#9c9c9c;letter-spacing:0.800px;">Search Lead name and project name...</div>
<div class="tx" style="left:1752.68px;top:398.29px;font-size:16.96px;font-weight:400;color:#a3a7ab;letter-spacing:0.640px;-webkit-text-stroke:0.37px #a3a7ab;">Export</div>
<div class="tx" style="left:374.94px;top:507.56px;font-size:17.68px;font-weight:700;color:#ffffff;letter-spacing:0.325px;">Lead Name</div>
<div class="tx" style="left:597.94px;top:507.56px;font-size:17.68px;font-weight:700;color:#ffffff;letter-spacing:0.155px;">Project Name</div>
<div class="tx" style="left:903.26px;top:507.56px;font-size:17.68px;font-weight:700;color:#ffffff;letter-spacing:0.325px;">Stage</div>
<div class="tx" style="left:1054.94px;top:507.56px;font-size:17.68px;font-weight:700;color:#ffffff;letter-spacing:-0.118px;">Project Type</div>
<div class="tx" style="left:1223.10px;top:507.56px;font-size:17.68px;font-weight:700;color:#ffffff;letter-spacing:-0.230px;">Lead Source</div>
<div class="tx" style="left:1515.36px;top:507.56px;font-size:17.68px;font-weight:700;color:#ffffff;letter-spacing:-0.157px;">Reporter</div>
<div class="tx" style="left:1758.31px;top:507.56px;font-size:17.68px;font-weight:700;color:#ffffff;letter-spacing:-0.350px;">Assignees</div>
<div class="tx" style="left:374.52px;top:585.07px;font-size:18.70px;font-weight:700;color:#000000;letter-spacing:0.760px;">matghe</div>
<div class="tx" style="left:536.15px;top:585.52px;font-size:17.10px;font-weight:400;color:#111111;letter-spacing:0.263px;">Marine_interiors_TYYR_157451</div>
<div class="tx" style="left:856.05px;top:586.67px;font-size:16.81px;font-weight:400;color:#222222;letter-spacing:0.059px;">Scheduled Meeti...</div>
<div class="tx" style="left:1057.94px;top:586.51px;font-size:17.68px;font-weight:400;color:#1a1a1a;letter-spacing:0.186px;">Exterior Design</div>
<div class="tx" style="left:1502.36px;top:586.51px;font-size:17.68px;font-weight:400;color:#1a1a1a;letter-spacing:0.260px;">No Reporter</div>
<div class="tx" style="left:374.52px;top:671.91px;font-size:18.70px;font-weight:700;color:#000000;letter-spacing:-0.375px;">shojr</div>
<div class="tx" style="left:536.15px;top:673.26px;font-size:17.10px;font-weight:400;color:#111111;letter-spacing:0.459px;">Marine_interiors_TYYR_583317</div>
<div class="tx" style="left:855.15px;top:674.41px;font-size:16.81px;font-weight:400;color:#222222;letter-spacing:0.100px;">New</div>
<div class="tx" style="left:1057.94px;top:673.35px;font-size:17.68px;font-weight:400;color:#1a1a1a;letter-spacing:0.186px;">Exterior Design</div>
<div class="tx" style="left:1502.36px;top:673.35px;font-size:17.68px;font-weight:400;color:#1a1a1a;letter-spacing:0.260px;">No Reporter</div>
<div class="tx" style="left:1750.94px;top:586.51px;font-size:17.68px;font-weight:400;color:#1a1a1a;letter-spacing:0.600px;">Unassigned</div>

<!-- black strip -->
<div class="a" style="left:1865px;top:0;width:11px;height:730px;background:#000"></div>
<!-- red highlight rect -->
<div class="a" style="left:1676px;top:119.2px;width:189px;height:65px;border:5px solid #e21d1d"></div>
</body></html>
